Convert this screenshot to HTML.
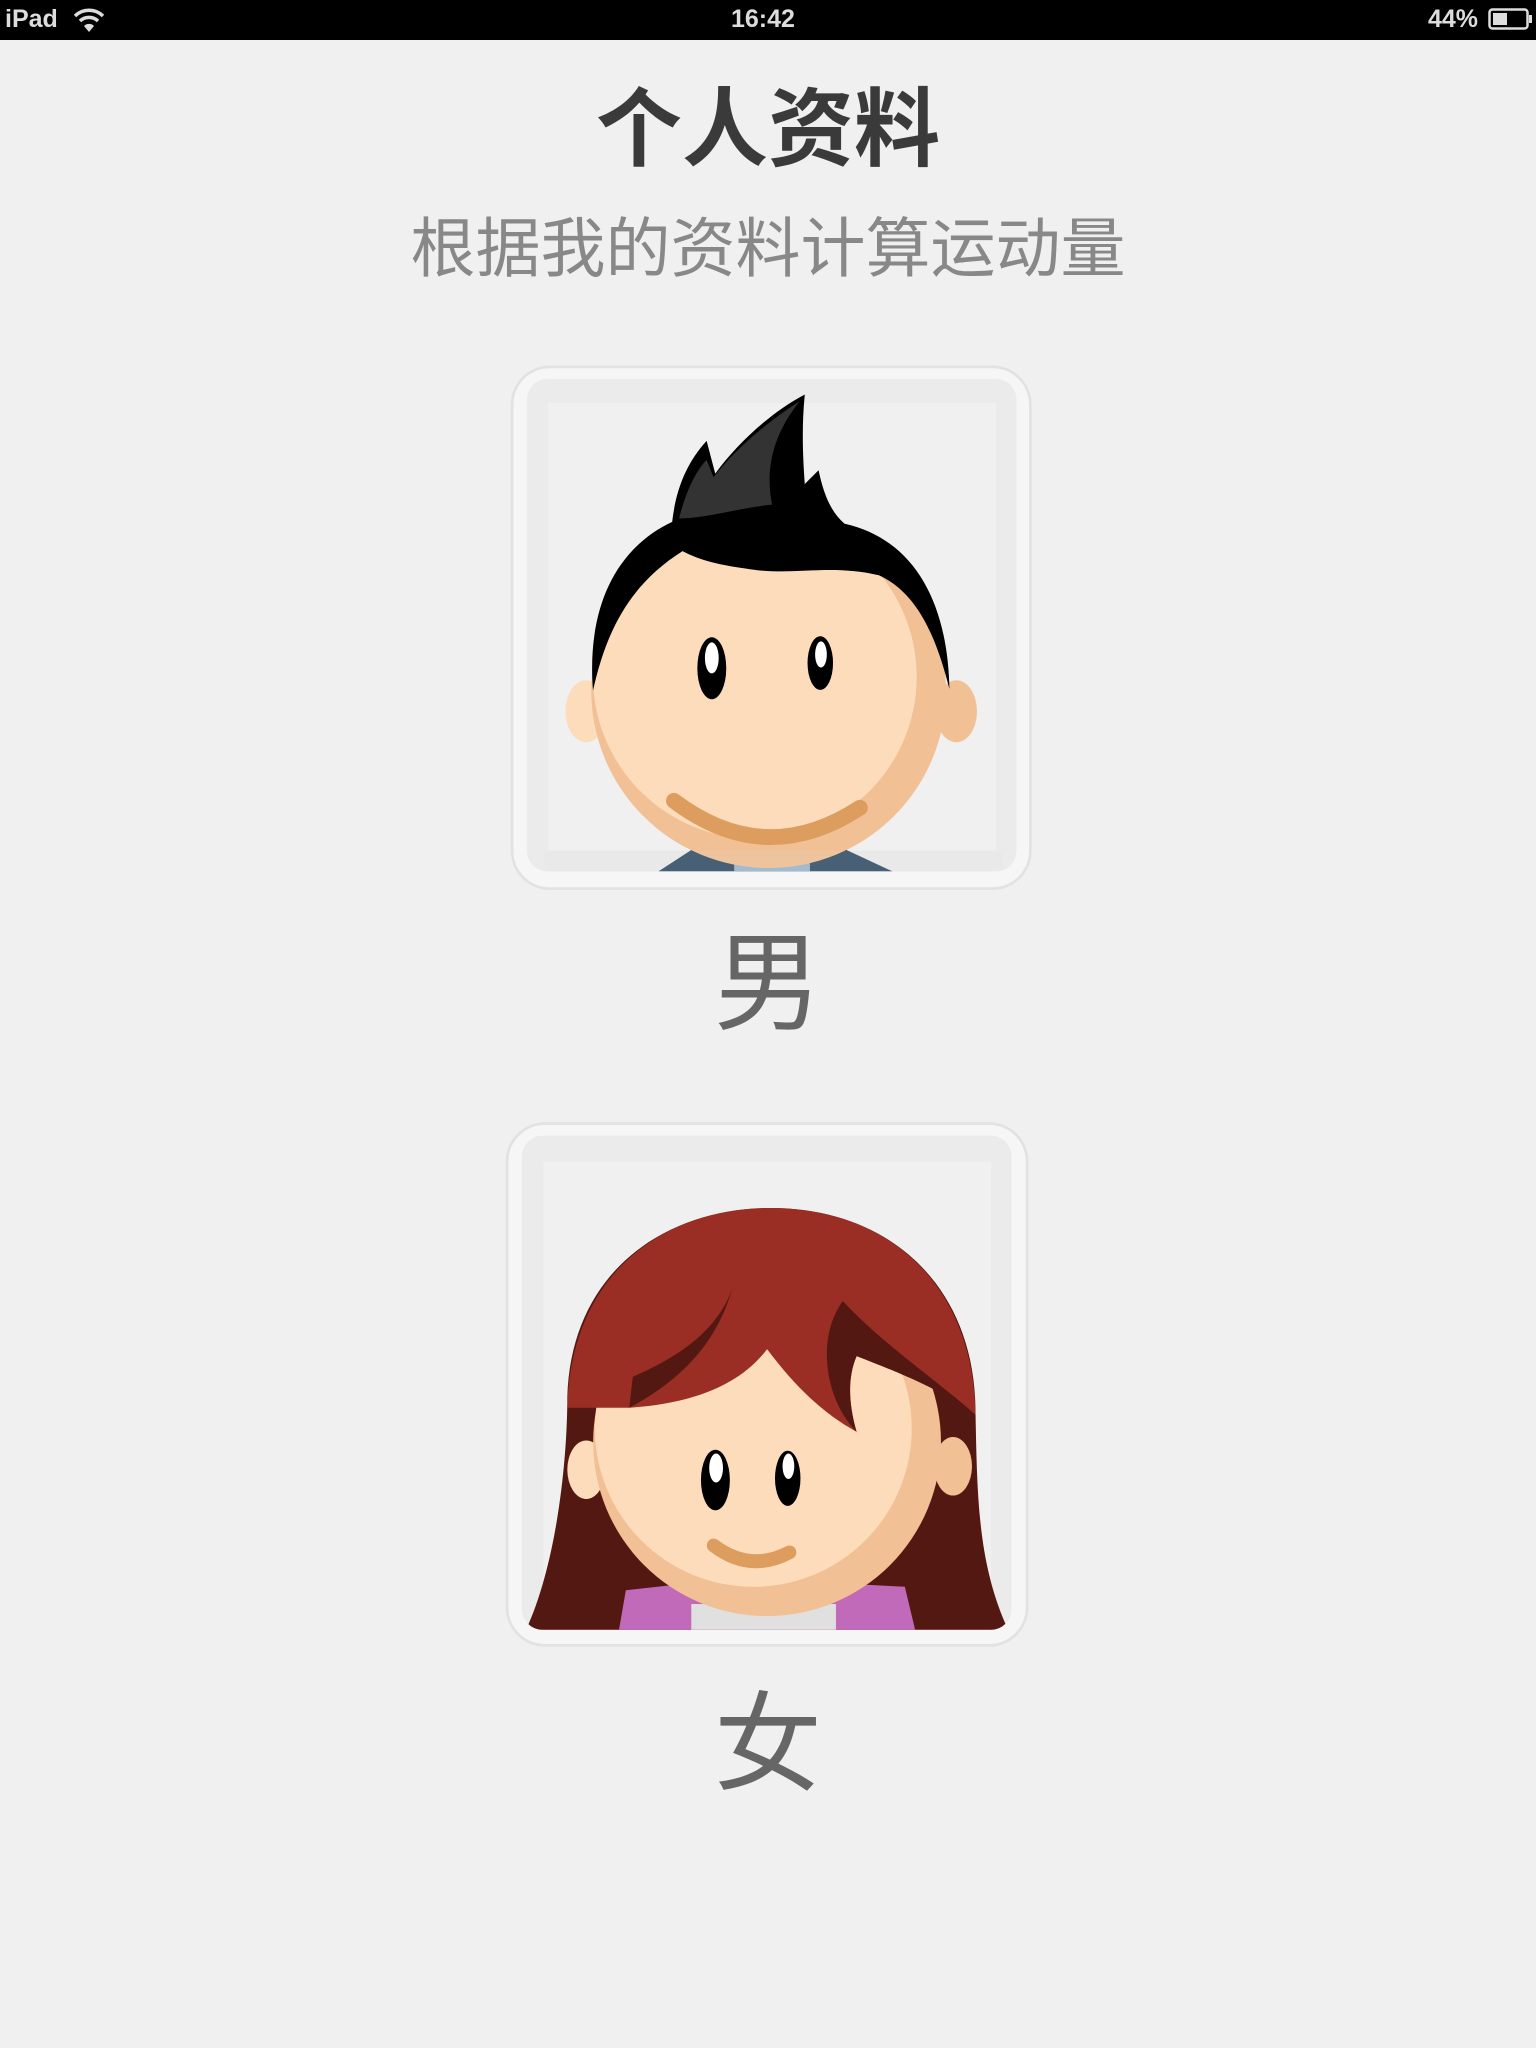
<!DOCTYPE html>
<html><head><meta charset="utf-8"><style>
html,body{margin:0;padding:0;}
body{width:1536px;height:2048px;background:#f0f0f0;position:relative;overflow:hidden;font-family:"Liberation Sans","Noto Sans CJK SC",sans-serif;}
.sb{position:absolute;left:0;top:0;width:1536px;height:40px;background:#000;color:#ddd;font-weight:bold;font-size:25px;}
.sb span{position:absolute;top:5px;}
.t{position:absolute;left:0;width:1536px;text-align:center;}
svg{position:absolute;}
</style></head><body>
<div class="sb">
<span style="left:5px">iPad</span>
<svg style="left:73px;top:8px" width="32" height="24" viewBox="0 0 32 24"><path d="M2 8 A20 20 0 0 1 30 8" stroke="#ddd" stroke-width="3.5" fill="none"/><path d="M7 13 A13 13 0 0 1 25 13" stroke="#ddd" stroke-width="3.5" fill="none"/><path d="M16 24 L11 18 A7 7 0 0 1 21 18 Z" fill="#ddd"/></svg>
<span style="left:731px">16:42</span>
<span style="left:1428px">44%</span>
<svg style="left:1488px;top:8px" width="46" height="22" viewBox="0 0 46 22"><rect x="1.5" y="1.5" width="38" height="19" rx="3" fill="none" stroke="#ddd" stroke-width="2.5"/><rect x="5" y="5" width="14" height="12" fill="#ddd"/><rect x="41" y="7" width="3" height="8" fill="#ddd"/></svg>
</div>
<div class="t" style="top:84px;font-size:86px;line-height:92px;font-weight:700;color:#3a3a3a">个人资料</div>
<div class="t" style="top:214px;font-size:65px;line-height:70px;color:#888">根据我的资料计算运动量</div>

<!-- male -->
<svg style="left:500px;top:360px" width="540" height="540" viewBox="0 0 1568 1568">
<defs><clipPath id="c1"><rect x="78" y="55" width="1422" height="1430" rx="60"/></clipPath></defs>
<rect x="35" y="20" width="1505" height="1515" rx="110" fill="#f6f6f6" stroke="#e2e2e2" stroke-width="8"/>
<rect x="78" y="55" width="1422" height="1430" rx="60" fill="#ebebeb"/>
<rect x="140" y="125" width="1300" height="1300" fill="#f0f0f0"/>
<g clip-path="url(#c1)">
<path d="M460 1485 L560 1420 L1000 1420 L1140 1485Z" fill="#2d4a63"/>
<rect x="680" y="1420" width="220" height="65" fill="#9ab4cc"/>
<ellipse cx="250" cy="1020" rx="60" ry="90" fill="#fddcbc"/>
<ellipse cx="1325" cy="1020" rx="60" ry="90" fill="#f1c095"/>
<circle cx="780" cy="960" r="515" fill="#f1c095"/>
<circle cx="740" cy="920" r="470" fill="#fddcbc"/>
<path d="M270 960 C250 700 350 540 500 470 C510 380 540 300 600 235 L625 330 C690 240 790 150 885 100 C875 200 880 290 885 360 L925 320 C940 390 960 440 1000 475 C1200 520 1300 700 1305 955 C1270 820 1220 680 1100 625 C950 590 850 630 710 605 C600 590 560 570 530 555 C380 650 310 780 270 960Z" fill="#000"/>
<path d="M520 460 C540 380 570 320 600 290 L620 340 C690 250 790 170 870 120 C790 220 770 320 790 420 C690 430 600 460 520 460Z" fill="#333"/>
<ellipse cx="615" cy="895" rx="42" ry="90" fill="#000"/><ellipse cx="615" cy="865" rx="20" ry="45" fill="#fff"/>
<ellipse cx="930" cy="880" rx="37" ry="78" fill="#000"/><ellipse cx="932" cy="855" rx="17" ry="38" fill="#fff"/>
<path d="M505 1280 Q770 1480 1045 1300" stroke="#dc9d5e" stroke-width="46" fill="none" stroke-linecap="round"/>
<rect x="130" y="1425" width="1330" height="60" fill="#dedede" opacity="0.15"/>
</g>
</svg>
<div class="t" style="top:927px;font-size:108px;line-height:114px;color:#666">男</div>

<!-- female -->
<svg style="left:495px;top:1115px" width="540" height="540" viewBox="0 0 1568 1568">
<defs><clipPath id="c2"><rect x="78" y="60" width="1422" height="1435" rx="60"/></clipPath></defs>
<rect x="35" y="25" width="1510" height="1515" rx="110" fill="#f6f6f6" stroke="#e2e2e2" stroke-width="8"/>
<rect x="78" y="60" width="1422" height="1435" rx="60" fill="#ebebeb"/>
<rect x="140" y="135" width="1300" height="1300" fill="#f0f0f0"/>
<g clip-path="url(#c2)">
<path d="M90 1495 C180 1300 210 1000 210 820 C220 450 500 270 800 270 C1150 270 1390 500 1395 850 C1400 1100 1400 1300 1490 1495Z" fill="#541812"/>
<path d="M360 1495 L380 1380 L560 1360 L1000 1360 L1190 1370 L1220 1495Z" fill="#c26aba"/>
<rect x="570" y="1420" width="420" height="75" fill="#e0e0e0"/>
<ellipse cx="265" cy="1030" rx="55" ry="85" fill="#fddcbc"/>
<ellipse cx="1330" cy="1020" rx="55" ry="85" fill="#f1c095"/>
<circle cx="790" cy="950" r="505" fill="#f1c095"/>
<circle cx="750" cy="910" r="460" fill="#fddcbc"/>
<path d="M210 850 C220 450 500 270 800 270 C1150 270 1390 500 1395 870 C1300 800 1180 750 1050 700 C1020 770 1030 850 1050 920 C960 870 880 800 790 680 C700 800 540 840 390 850 C300 850 250 850 210 850Z" fill="#9b2e24"/>
<path d="M390 850 C520 780 640 680 690 500 C650 620 540 700 400 760Z" fill="#541812"/>
<path d="M1050 920 C960 830 930 650 1010 540 C1120 660 1270 760 1395 870 C1300 800 1180 750 1050 700 C1020 770 1030 850 1050 920Z" fill="#541812"/>
<ellipse cx="640" cy="1060" rx="42" ry="88" fill="#000"/><ellipse cx="642" cy="1025" rx="20" ry="42" fill="#fff"/>
<ellipse cx="850" cy="1055" rx="37" ry="80" fill="#000"/><ellipse cx="852" cy="1020" rx="17" ry="37" fill="#fff"/>
<path d="M635 1250 Q740 1330 855 1270" stroke="#dc9d5e" stroke-width="40" fill="none" stroke-linecap="round"/>
</g>
</svg>
<div class="t" style="top:1688px;font-size:108px;line-height:114px;color:#666">女</div>
</body></html>
